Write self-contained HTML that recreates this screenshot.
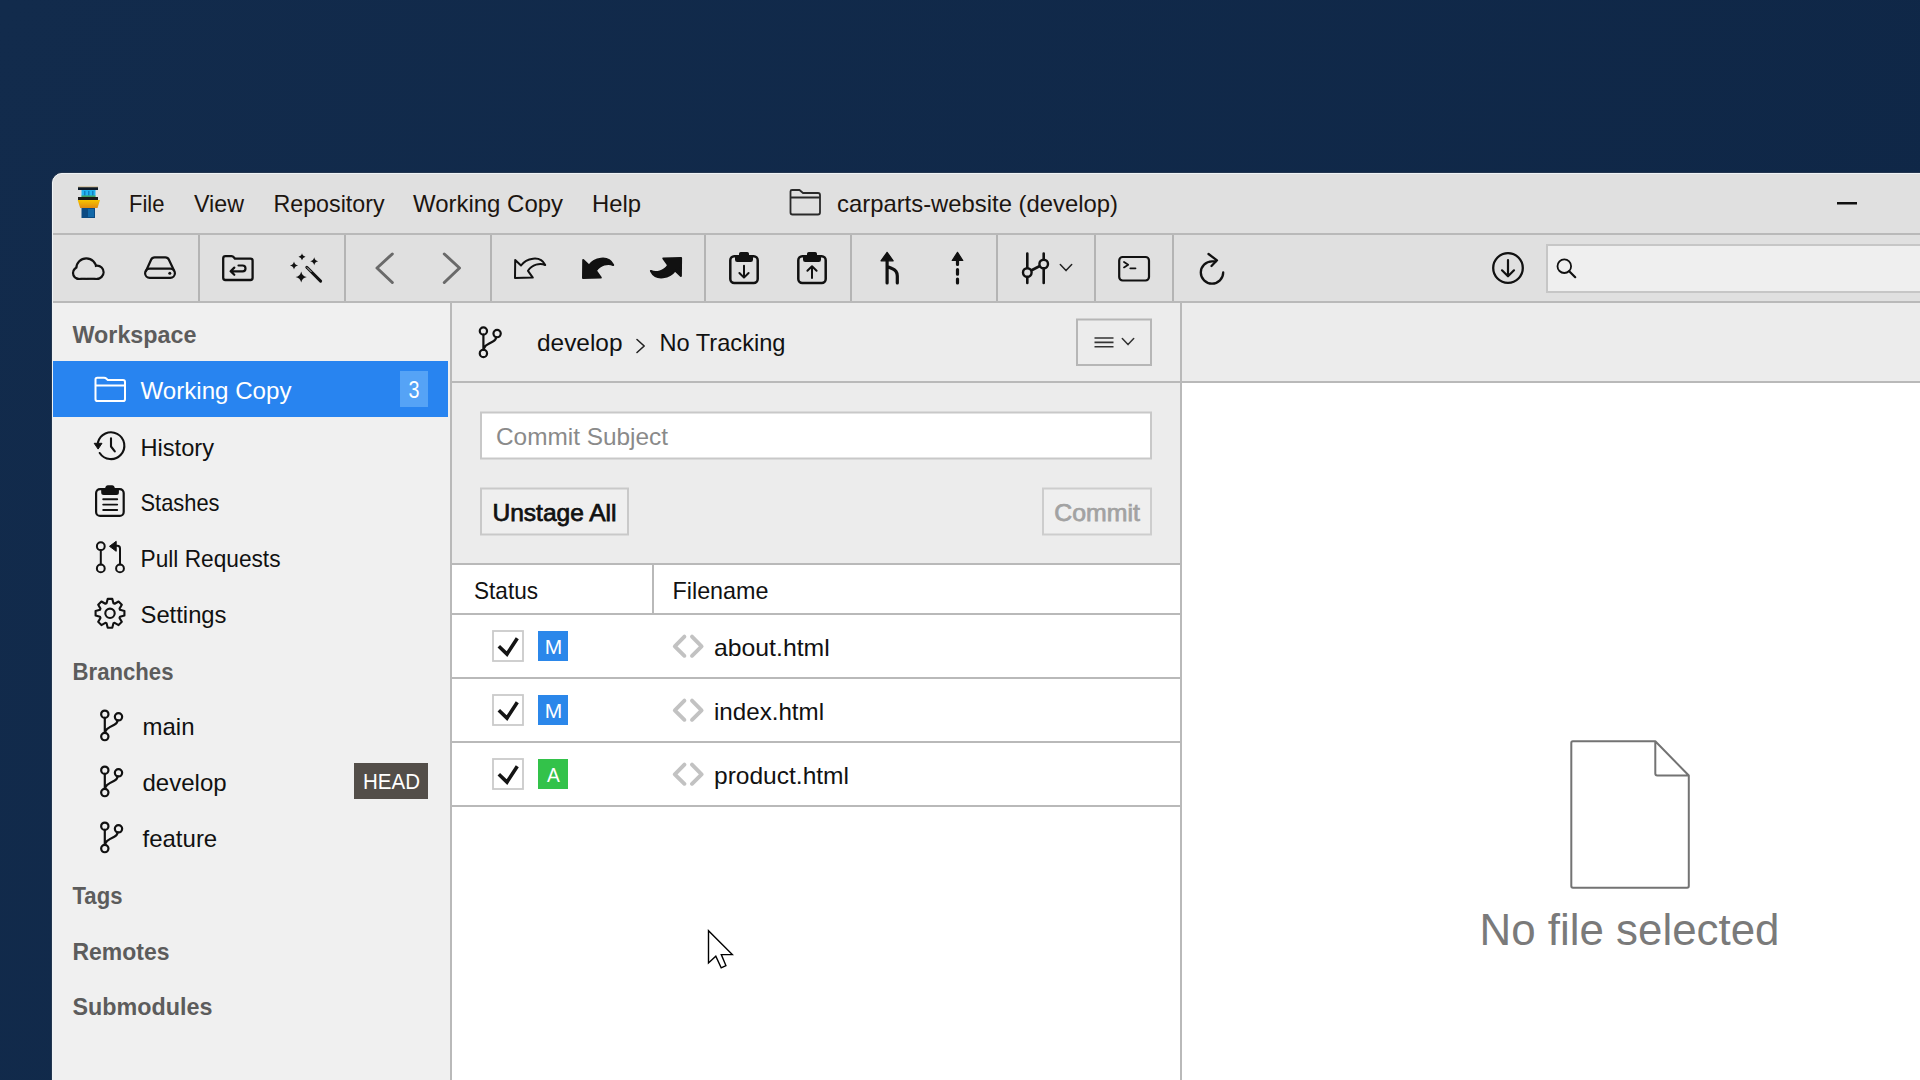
<!DOCTYPE html>
<html><head><meta charset="utf-8"><title>Working Copy</title>
<style>html,body{margin:0;padding:0;width:1920px;height:1080px;overflow:hidden;background:#10264a;font-family:"Liberation Sans", sans-serif;}svg{display:block}</style>
</head><body>
<svg width="1920" height="1080" viewBox="0 0 1920 1080" font-family='"Liberation Sans", sans-serif'><defs><linearGradient id="bg" x1="0" y1="0" x2="1" y2="0.3"><stop offset="0" stop-color="#122b4c"/><stop offset="1" stop-color="#0f2747"/></linearGradient><linearGradient id="sh" x1="0" y1="0" x2="0" y2="1"><stop offset="0" stop-color="#000" stop-opacity="0"/><stop offset="1" stop-color="#000" stop-opacity="0.22"/></linearGradient><linearGradient id="shl" x1="0" y1="0" x2="1" y2="0"><stop offset="0" stop-color="#000" stop-opacity="0"/><stop offset="1" stop-color="#000" stop-opacity="0.22"/></linearGradient><linearGradient id="yel" x1="0" y1="0" x2="0" y2="1"><stop offset="0" stop-color="#f7c600"/><stop offset="1" stop-color="#e08a10"/></linearGradient></defs>
<rect x="0" y="0" width="1920" height="1080" fill="url(#bg)"/>
<path d="M52 183 A10 10 0 0 1 62 173 H1920 V1080 H52 Z" fill="#e0e0e0"/>
<rect x="52" y="233" width="1868" height="2" fill="#b9b9b9"/>
<rect x="52" y="301" width="1868" height="2" fill="#b9b9b9"/>
<rect x="198" y="235" width="2" height="66" fill="#b4b4b4"/>
<rect x="344" y="235" width="2" height="66" fill="#b4b4b4"/>
<rect x="490" y="235" width="2" height="66" fill="#b4b4b4"/>
<rect x="704" y="235" width="2" height="66" fill="#b4b4b4"/>
<rect x="850" y="235" width="2" height="66" fill="#b4b4b4"/>
<rect x="996" y="235" width="2" height="66" fill="#b4b4b4"/>
<rect x="1094" y="235" width="2" height="66" fill="#b4b4b4"/>
<rect x="1172" y="235" width="2" height="66" fill="#b4b4b4"/>
<rect x="1547" y="245" width="380" height="47" fill="#efefef" stroke="#c6c6c6" stroke-width="2"/>
<rect x="52" y="303" width="398" height="777" fill="#f0f0f0"/>
<rect x="450" y="303" width="2" height="777" fill="#b9b9b9"/>
<rect x="452" y="303" width="728" height="78" fill="#ececec"/>
<rect x="452" y="381" width="728" height="2" fill="#b9b9b9"/>
<rect x="452" y="383" width="728" height="180" fill="#ececec"/>
<rect x="452" y="563" width="728" height="2" fill="#b9b9b9"/>
<rect x="452" y="565" width="728" height="515" fill="#ffffff"/>
<rect x="452" y="613" width="728" height="2" fill="#b9b9b9"/>
<rect x="452" y="677" width="728" height="2" fill="#b9b9b9"/>
<rect x="452" y="741" width="728" height="2" fill="#b9b9b9"/>
<rect x="452" y="805" width="728" height="2" fill="#b9b9b9"/>
<rect x="652" y="565" width="2" height="48" fill="#b9b9b9"/>
<rect x="1180" y="303" width="2" height="777" fill="#b9b9b9"/>
<rect x="1182" y="303" width="738" height="78" fill="#ececec"/>
<rect x="1182" y="381" width="738" height="2" fill="#b9b9b9"/>
<rect x="1182" y="383" width="738" height="697" fill="#ffffff"/>
<rect x="78" y="187" width="20" height="3" fill="#0d1b2a"/>
<rect x="78" y="186.5" width="20" height="0.8" fill="#c8b080"/>
<rect x="81.5" y="190" width="14" height="6.5" fill="#22b4f0"/>
<rect x="84" y="191" width="1.5" height="4.5" fill="#1280c0"/>
<rect x="88" y="191" width="1.5" height="4.5" fill="#1280c0"/>
<rect x="92" y="191" width="1.5" height="4.5" fill="#1280c0"/>
<rect x="81.5" y="195.5" width="14" height="1.5" fill="#40a060"/>
<rect x="78" y="197" width="20" height="3" fill="#1c1a18"/>
<path d="M77.7 200 H100 L97.5 208 H80.2 Z" fill="url(#yel)"/>
<rect x="81.5" y="208" width="13.5" height="10" fill="#0c4a82"/>
<rect x="88" y="209" width="6" height="8" fill="#1268a8"/>
<text x="129" y="211.5" font-size="24" font-weight="400" fill="#1c1510" text-anchor="start" textLength="35.5" lengthAdjust="spacingAndGlyphs">File</text>
<text x="194" y="211.5" font-size="24" font-weight="400" fill="#1c1510" text-anchor="start" textLength="50" lengthAdjust="spacingAndGlyphs">View</text>
<text x="273.5" y="211.5" font-size="24" font-weight="400" fill="#1c1510" text-anchor="start" textLength="111" lengthAdjust="spacingAndGlyphs">Repository</text>
<text x="413" y="211.5" font-size="24" font-weight="400" fill="#1c1510" text-anchor="start" textLength="150" lengthAdjust="spacingAndGlyphs">Working Copy</text>
<text x="592" y="211.5" font-size="24" font-weight="400" fill="#1c1510" text-anchor="start" textLength="49" lengthAdjust="spacingAndGlyphs">Help</text>
<path d="M790.5 212.5 V191.5 Q790.5 190 792 190 H799.5 L803 193 H818 Q820 193 820 195 V212.5 Q820 214.5 818 214.5 H792.5 Q790.5 214.5 790.5 212.5 Z M790.5 197.5 H820" fill="none" stroke="#2a2a2a" stroke-width="1.8" stroke-linejoin="round"/>
<text x="837" y="212" font-size="24" font-weight="400" fill="#1c1510" text-anchor="start" textLength="281" lengthAdjust="spacingAndGlyphs">carparts-website (develop)</text>
<rect x="1837" y="202" width="20" height="2.5" fill="#111"/>
<g fill="#111111" stroke="#111111" stroke-width="4.4"><circle cx="86.3" cy="268.3" r="8.9"/><circle cx="78.8" cy="273" r="4.7"/><circle cx="97" cy="272.2" r="5.5"/><rect x="78.8" y="268" width="18.2" height="9.7"/></g><g fill="#e0e0e0"><circle cx="86.3" cy="268.3" r="8.9"/><circle cx="78.8" cy="273" r="4.7"/><circle cx="97" cy="272.2" r="5.5"/><rect x="78.8" y="268" width="18.2" height="9.7"/></g>
<path d="M146 271 L151.2 259.5 Q152.2 257.3 154.6 257.3 H165.4 Q167.8 257.3 168.8 259.5 L174 270.5" fill="none" stroke="#111111" stroke-linecap="round" stroke-linejoin="round" stroke-width="2.2"/>
<rect x="145.1" y="268.6" width="29.8" height="9.2" rx="4.6" fill="none" stroke="#111111" stroke-linecap="round" stroke-linejoin="round" stroke-width="2.2"/>
<circle cx="169.8" cy="273.3" r="1.5" fill="#111111"/>
<path d="M223.2 258.5 Q223.2 256.2 225.5 256.2 H231.5 Q233 256.2 234 257.5 L235 258.7 H250.5 Q252.6 258.7 252.6 260.8 V277.8 Q252.6 280 250.5 280 H225.4 Q223.2 280 223.2 277.8 Z" fill="none" stroke="#111111" stroke-linecap="round" stroke-linejoin="round" stroke-width="2.3"/>
<path d="M238.5 265.5 H242.6 A2.9 2.9 0 0 1 242.6 271.3 H231 M234.3 267.6 L230.6 271.3 L234.3 274.8" fill="none" stroke="#111111" stroke-linecap="round" stroke-linejoin="round" stroke-width="2.2"/>
<path d="M302 253.2 Q302.595 256.10499999999996 305.5 256.7 Q302.595 257.295 302 260.2 Q301.405 257.295 298.5 256.7 Q301.405 256.10499999999996 302 253.2 Z M314.2 257.3 Q314.88 260.62 318.2 261.3 Q314.88 261.98 314.2 265.3 Q313.52 261.98 310.2 261.3 Q313.52 260.62 314.2 257.3 Z M294 261.4 Q294.697 264.803 298.1 265.5 Q294.697 266.197 294 269.6 Q293.303 266.197 289.9 265.5 Q293.303 264.803 294 261.4 Z M301.2 271.4 Q302.152 276.048 306.8 277 Q302.152 277.952 301.2 282.6 Q300.248 277.952 295.59999999999997 277 Q300.248 276.048 301.2 271.4 Z" fill="#111111"/>
<path d="M306.8 267.3 L320.6 281.1" stroke="#111111" stroke-width="3" stroke-linecap="round"/>
<path d="M307.2 267.7 L311.2 271.7" stroke="#e0e0e0" stroke-width="0.9" stroke-linecap="round"/>
<path d="M392.3 254 L377 268 L392.3 282.5 M444.3 254 L459.5 268 L444.3 282.5" fill="none" stroke="#6a6a6a" stroke-width="3" stroke-linecap="round" stroke-linejoin="round"/>
<path d="M515.2 260 L521 265.5 C526 258.5 540 254.5 545.2 265 C540 262.5 532 264.5 528 270.8 L532.8 277.6 L515 278 Z" fill="none" stroke="#111111" stroke-linecap="round" stroke-linejoin="round" stroke-width="2"/>
<g transform="translate(68 0)"><path d="M515.2 260 L521 265.5 C526 258.5 540 254.5 545.2 265 C540 262.5 532 264.5 528 270.8 L532.8 277.6 L515 278 Z" fill="#111111" stroke="#111111" stroke-width="2" stroke-linejoin="round"/></g>
<g transform="translate(666 268) rotate(180) translate(-530.1 -268)"><path d="M515.2 260 L521 265.5 C526 258.5 540 254.5 545.2 265 C540 262.5 532 264.5 528 270.8 L532.8 277.6 L515 278 Z" fill="#111111" stroke="#111111" stroke-width="2" stroke-linejoin="round"/></g>
<g transform="translate(0 0)"><rect x="730.3" y="256.2" width="27.4" height="26.8" rx="4" fill="none" stroke="#111111" stroke-linecap="round" stroke-linejoin="round" stroke-width="2.5"/><path d="M735 256 H739 V253.8 Q739 252 740.8 252 H747.2 Q749 252 749 253.8 V256 H753 V259.8 Q753 262 750.8 262 H737.2 Q735 262 735 259.8 Z" fill="#111111"/><path d="M744 265.8 V277.5 M739.4 273 L744 277.6 L748.6 273" fill="none" stroke="#111111" stroke-linecap="round" stroke-linejoin="round" stroke-width="2"/></g>
<g transform="translate(68 0)"><rect x="730.3" y="256.2" width="27.4" height="26.8" rx="4" fill="none" stroke="#111111" stroke-linecap="round" stroke-linejoin="round" stroke-width="2.5"/><path d="M735 256 H739 V253.8 Q739 252 740.8 252 H747.2 Q749 252 749 253.8 V256 H753 V259.8 Q753 262 750.8 262 H737.2 Q735 262 735 259.8 Z" fill="#111111"/><path d="M744 278 V266.5 M739.4 270.8 L744 266.2 L748.6 270.8" fill="none" stroke="#111111" stroke-linecap="round" stroke-linejoin="round" stroke-width="2"/></g>
<path d="M887.1 252.3 L881 260.8 H893.2 Z" fill="#111111" stroke="#111111" stroke-width="1.2" stroke-linejoin="round"/>
<path d="M887.1 260 V283 M887.1 266.5 L892 268.5 Q897.3 270.5 897.3 276 V283" fill="none" stroke="#111111" stroke-linecap="round" stroke-linejoin="round" stroke-width="3.2"/>
<path d="M957.5 252.3 L952.2 260.5 H962.8 Z" fill="#111111" stroke="#111111" stroke-width="1.2" stroke-linejoin="round"/>
<path d="M957.5 260 V264.5 M957.5 269.5 V274.2 M957.5 279 V283" fill="none" stroke="#111111" stroke-linecap="round" stroke-linejoin="round" stroke-width="3.2"/>
<path d="M1027.3 253.5 V283 M1043.7 253.5 V283 M1027.3 272.5 L1043.7 264" fill="none" stroke="#111111" stroke-linecap="round" stroke-linejoin="round" stroke-width="2.6"/>
<circle cx="1027.3" cy="272.5" r="4.3" fill="#e0e0e0" stroke="#111111" stroke-width="2.4"/>
<circle cx="1043.7" cy="264" r="4.3" fill="#e0e0e0" stroke="#111111" stroke-width="2.4"/>
<path d="M1060.3 264.6 L1066 270.6 L1071.7 264.6" fill="none" stroke="#222" stroke-width="1.5" stroke-linecap="round" stroke-linejoin="round"/>
<rect x="1119.2" y="257" width="29.8" height="23.5" rx="3.5" fill="none" stroke="#111111" stroke-linecap="round" stroke-linejoin="round" stroke-width="2.2"/>
<path d="M1124 262 L1128.2 264.7 L1124 267.4 M1130.3 268.3 H1135.5" fill="none" stroke="#111111" stroke-linecap="round" stroke-linejoin="round" stroke-width="1.8"/>
<path d="M1223.2 272.5 A11.2 11.2 0 1 1 1212 261.3 H1216" fill="none" stroke="#111111" stroke-linecap="round" stroke-linejoin="round" stroke-width="2.3"/>
<path d="M1208.5 254 L1217 260.3 L1211.5 266" fill="none" stroke="#111111" stroke-linecap="round" stroke-linejoin="round" stroke-width="2.3"/>
<circle cx="1508" cy="268" r="14.8" fill="none" stroke="#111111" stroke-linecap="round" stroke-linejoin="round" stroke-width="2.3"/>
<path d="M1508 260.2 V276 M1502 270.3 L1508 276.3 L1514 270.3" fill="none" stroke="#111111" stroke-linecap="round" stroke-linejoin="round" stroke-width="2.2"/>
<circle cx="1564.3" cy="266.2" r="6.8" fill="none" stroke="#111111" stroke-linecap="round" stroke-linejoin="round" stroke-width="1.8"/>
<path d="M1569.2 271.2 L1575.2 277.2" fill="none" stroke="#111111" stroke-linecap="round" stroke-linejoin="round" stroke-width="2.2"/>
<text x="72.5" y="343" font-size="24" font-weight="700" fill="#5c5c5c" text-anchor="start" textLength="124" lengthAdjust="spacingAndGlyphs">Workspace</text>
<rect x="52" y="361" width="396" height="56" fill="#2884f0"/>
<path d="M95.5 399.2 V379.5 Q95.5 377.8 97.2 377.8 H104 Q105.5 377.8 106.5 378.8 L107.8 380.1 H123 Q125 380.1 125 382.1 V399.2 Q125 401 123.2 401 H97.3 Q95.5 401 95.5 399.2 Z M95.5 385.5 H125" fill="none" stroke="#ffffff" stroke-width="2" stroke-linejoin="round"/>
<text x="140.5" y="399" font-size="24" font-weight="400" fill="#ffffff" text-anchor="start" textLength="151" lengthAdjust="spacingAndGlyphs">Working Copy</text>
<rect x="400" y="371" width="28" height="36" fill="#55a3f6"/>
<text x="408.6" y="398" font-size="24" font-weight="400" fill="#ffffff" text-anchor="start" textLength="11" lengthAdjust="spacingAndGlyphs">3</text>
<path d="M99.7 453 A13.4 13.4 0 1 0 97.9 442.6 M111 438.2 V446.5 L114.8 451.4" fill="none" stroke="#111111" stroke-linecap="round" stroke-linejoin="round" stroke-width="2.1"/>
<path d="M94.2 443.3 H102 L98.1 449.1 Z" fill="#111111" stroke="#111111" stroke-width="1" stroke-linejoin="round"/>
<text x="140.5" y="455.6" font-size="24" font-weight="400" fill="#111" text-anchor="start" textLength="73.5" lengthAdjust="spacingAndGlyphs">History</text>
<rect x="96.1" y="489.1" width="27.6" height="26.8" rx="4" fill="none" stroke="#111111" stroke-linecap="round" stroke-linejoin="round" stroke-width="2.2"/>
<path d="M101.2 489 H105 Q105.3 485.2 108 485.2 H112 Q114.7 485.2 115 489 H118.9 V492.5 Q118.9 495 116.4 495 H103.7 Q101.2 495 101.2 492.5 Z" fill="#111111"/>
<path d="M103.2 499.2 H117.2 M103.2 504.6 H117.2 M103.2 510 H117.2" fill="none" stroke="#111111" stroke-linecap="round" stroke-linejoin="round" stroke-width="1.9"/>
<text x="140.5" y="510.6" font-size="24" font-weight="400" fill="#111" text-anchor="start" textLength="79" lengthAdjust="spacingAndGlyphs">Stashes</text>
<circle cx="100.8" cy="546.2" r="3.9" fill="none" stroke="#111111" stroke-linecap="round" stroke-linejoin="round" stroke-width="2"/>
<circle cx="100.8" cy="568.4" r="3.9" fill="none" stroke="#111111" stroke-linecap="round" stroke-linejoin="round" stroke-width="2"/>
<circle cx="120" cy="568.4" r="3.9" fill="none" stroke="#111111" stroke-linecap="round" stroke-linejoin="round" stroke-width="2"/>
<path d="M100.8 550.1 V564.5 M120 564.5 V548.5 Q120 545.8 117.3 545.8 H114" fill="none" stroke="#111111" stroke-linecap="round" stroke-linejoin="round" stroke-width="2"/>
<path d="M109.5 546.3 L116.2 541.3 V551.3 Z" fill="#111111" stroke="#111111" stroke-width="1" stroke-linejoin="round"/>
<text x="140.5" y="566.7" font-size="24" font-weight="400" fill="#111" text-anchor="start" textLength="140" lengthAdjust="spacingAndGlyphs">Pull Requests</text>
<path d="M106.55 603.28 L107.72 598.88 L112.28 598.88 L113.45 603.28 L114.65 603.77 L118.58 601.49 L121.81 604.72 L119.53 608.65 L120.02 609.85 L124.42 611.02 L124.42 615.58 L120.02 616.75 L119.53 617.95 L121.81 621.88 L118.58 625.11 L114.65 622.83 L113.45 623.32 L112.28 627.72 L107.72 627.72 L106.55 623.32 L105.35 622.83 L101.42 625.11 L98.19 621.88 L100.47 617.95 L99.98 616.75 L95.58 615.58 L95.58 611.02 L99.98 609.85 L100.47 608.65 L98.19 604.72 L101.42 601.49 L105.35 603.77 Z" fill="none" stroke="#111111" stroke-linecap="round" stroke-linejoin="round" stroke-width="2.1"/>
<circle cx="110" cy="613.3" r="4.7" fill="none" stroke="#111111" stroke-linecap="round" stroke-linejoin="round" stroke-width="2.1"/>
<text x="140.5" y="622.7" font-size="24" font-weight="400" fill="#111" text-anchor="start" textLength="86" lengthAdjust="spacingAndGlyphs">Settings</text>
<text x="72.5" y="679.5" font-size="24" font-weight="700" fill="#5c5c5c" text-anchor="start" textLength="101" lengthAdjust="spacingAndGlyphs">Branches</text>
<circle cx="104.8" cy="714.2" r="3.65" fill="none" stroke="#111111" stroke-linecap="round" stroke-linejoin="round" stroke-width="2.2"/><circle cx="104.8" cy="736.6" r="3.65" fill="none" stroke="#111111" stroke-linecap="round" stroke-linejoin="round" stroke-width="2.2"/><circle cx="118.5" cy="716.8000000000001" r="3.65" fill="none" stroke="#111111" stroke-linecap="round" stroke-linejoin="round" stroke-width="2.2"/><path d="M104.8 717.8000000000001 V733.0 M105.6 731.2 Q106.6 728.5 109.3 727.4000000000001 L114.3 724.7 Q117.39999999999999 723.2 117.6 720.4000000000001" fill="none" stroke="#111111" stroke-linecap="round" stroke-linejoin="round" stroke-width="2.2"/>
<text x="142.5" y="735.1" font-size="24" font-weight="400" fill="#111" text-anchor="start">main</text>
<circle cx="104.8" cy="770.2" r="3.65" fill="none" stroke="#111111" stroke-linecap="round" stroke-linejoin="round" stroke-width="2.2"/><circle cx="104.8" cy="792.6" r="3.65" fill="none" stroke="#111111" stroke-linecap="round" stroke-linejoin="round" stroke-width="2.2"/><circle cx="118.5" cy="772.8000000000001" r="3.65" fill="none" stroke="#111111" stroke-linecap="round" stroke-linejoin="round" stroke-width="2.2"/><path d="M104.8 773.8000000000001 V789.0 M105.6 787.2 Q106.6 784.5 109.3 783.4000000000001 L114.3 780.7 Q117.39999999999999 779.2 117.6 776.4000000000001" fill="none" stroke="#111111" stroke-linecap="round" stroke-linejoin="round" stroke-width="2.2"/>
<text x="142.5" y="790.6" font-size="24" font-weight="400" fill="#111" text-anchor="start">develop</text>
<circle cx="104.8" cy="826.2" r="3.65" fill="none" stroke="#111111" stroke-linecap="round" stroke-linejoin="round" stroke-width="2.2"/><circle cx="104.8" cy="848.6" r="3.65" fill="none" stroke="#111111" stroke-linecap="round" stroke-linejoin="round" stroke-width="2.2"/><circle cx="118.5" cy="828.8000000000001" r="3.65" fill="none" stroke="#111111" stroke-linecap="round" stroke-linejoin="round" stroke-width="2.2"/><path d="M104.8 829.8000000000001 V845.0 M105.6 843.2 Q106.6 840.5 109.3 839.4000000000001 L114.3 836.7 Q117.39999999999999 835.2 117.6 832.4000000000001" fill="none" stroke="#111111" stroke-linecap="round" stroke-linejoin="round" stroke-width="2.2"/>
<text x="142.5" y="846.6" font-size="24" font-weight="400" fill="#111" text-anchor="start">feature</text>
<rect x="354" y="763" width="74" height="36" fill="#534e49"/>
<text x="363" y="789.4" font-size="22" font-weight="400" fill="#ffffff" text-anchor="start" textLength="57" lengthAdjust="spacingAndGlyphs">HEAD</text>
<text x="72.5" y="903.5" font-size="24" font-weight="700" fill="#5c5c5c" text-anchor="start" textLength="50" lengthAdjust="spacingAndGlyphs">Tags</text>
<text x="72.5" y="959.5" font-size="24" font-weight="700" fill="#5c5c5c" text-anchor="start" textLength="97" lengthAdjust="spacingAndGlyphs">Remotes</text>
<text x="72.5" y="1015" font-size="24" font-weight="700" fill="#5c5c5c" text-anchor="start" textLength="140" lengthAdjust="spacingAndGlyphs">Submodules</text>
<circle cx="483.4" cy="331" r="3.65" fill="none" stroke="#111111" stroke-linecap="round" stroke-linejoin="round" stroke-width="2.2"/><circle cx="483.4" cy="353.4" r="3.65" fill="none" stroke="#111111" stroke-linecap="round" stroke-linejoin="round" stroke-width="2.2"/><circle cx="497.09999999999997" cy="333.6" r="3.65" fill="none" stroke="#111111" stroke-linecap="round" stroke-linejoin="round" stroke-width="2.2"/><path d="M483.4 334.6 V349.8 M484.2 348 Q485.2 345.3 487.9 344.2 L492.9 341.5 Q496.0 340 496.2 337.2" fill="none" stroke="#111111" stroke-linecap="round" stroke-linejoin="round" stroke-width="2.2"/>
<text x="537" y="351" font-size="24" font-weight="400" fill="#111" text-anchor="start" textLength="85.5" lengthAdjust="spacingAndGlyphs">develop</text>
<path d="M637 339.5 L644.2 346 L637 352.5" fill="none" stroke="#222" stroke-width="1.6" stroke-linecap="round" stroke-linejoin="round"/>
<text x="659.5" y="351" font-size="24" font-weight="400" fill="#111" text-anchor="start" textLength="126" lengthAdjust="spacingAndGlyphs">No Tracking</text>
<rect x="1077" y="319.5" width="74" height="45.5" fill="none" stroke="#b6b6b6" stroke-width="2"/>
<path d="M1094.5 338 H1113.5 M1094.5 342.4 H1113.5 M1094.5 346.8 H1113.5" stroke="#333" stroke-width="1.6"/>
<path d="M1122.3 338.5 L1128 344.6 L1133.7 338.5" fill="none" stroke="#333" stroke-width="1.5" stroke-linecap="round" stroke-linejoin="round"/>
<rect x="481" y="412.5" width="670" height="46" fill="#ffffff" stroke="#c8c8c8" stroke-width="2"/>
<text x="496" y="445.3" font-size="24" font-weight="400" fill="#8a8a8a" text-anchor="start" textLength="172" lengthAdjust="spacingAndGlyphs">Commit Subject</text>
<rect x="481" y="488.5" width="147" height="46" fill="#efefef" stroke="#c9c9c9" stroke-width="2"/>
<text x="492.5" y="521" font-size="24" font-weight="400" fill="#111" text-anchor="start" textLength="124" lengthAdjust="spacingAndGlyphs" stroke="#111" stroke-width="0.75">Unstage All</text>
<rect x="1043" y="488.5" width="108" height="46" fill="#efefef" stroke="#cdcdcd" stroke-width="2"/>
<text x="1054.3" y="521" font-size="24" font-weight="400" fill="#a2a2a2" text-anchor="start" textLength="85.5" lengthAdjust="spacingAndGlyphs" stroke="#a2a2a2" stroke-width="0.75">Commit</text>
<text x="474" y="599.3" font-size="24" font-weight="400" fill="#111" text-anchor="start" textLength="64" lengthAdjust="spacingAndGlyphs">Status</text>
<text x="672.5" y="599.3" font-size="24" font-weight="400" fill="#111" text-anchor="start" textLength="96" lengthAdjust="spacingAndGlyphs">Filename</text>
<rect x="493" y="631" width="30" height="30" fill="#ffffff" stroke="#cacaca" stroke-width="1.8"/>
<path d="M498.8 646.3 L507 654.1 L517.3 638.3" fill="none" stroke="#141414" stroke-width="3.6" stroke-linejoin="miter"/>
<rect x="538" y="631" width="30" height="30" fill="#2b87ea"/>
<text x="553.5" y="654.2" font-size="20" font-weight="400" fill="#ffffff" text-anchor="middle" textLength="17.5" lengthAdjust="spacingAndGlyphs">M</text>
<path d="M684.4 636.6 L674.8 646.3 L684.4 655.8 M692 636.6 L701.6 646.3 L692 655.8" fill="none" stroke="#c2c2c2" stroke-width="3.9" stroke-linecap="round" stroke-linejoin="round"/>
<text x="714" y="656" font-size="24" font-weight="400" fill="#111" text-anchor="start" textLength="115.7" lengthAdjust="spacingAndGlyphs">about.html</text>
<rect x="493" y="695" width="30" height="30" fill="#ffffff" stroke="#cacaca" stroke-width="1.8"/>
<path d="M498.8 710.3 L507 718.1 L517.3 702.3" fill="none" stroke="#141414" stroke-width="3.6" stroke-linejoin="miter"/>
<rect x="538" y="695" width="30" height="30" fill="#2b87ea"/>
<text x="553.5" y="718.2" font-size="20" font-weight="400" fill="#ffffff" text-anchor="middle" textLength="17.5" lengthAdjust="spacingAndGlyphs">M</text>
<path d="M684.4 700.6 L674.8 710.3 L684.4 719.8 M692 700.6 L701.6 710.3 L692 719.8" fill="none" stroke="#c2c2c2" stroke-width="3.9" stroke-linecap="round" stroke-linejoin="round"/>
<text x="714" y="719.9" font-size="24" font-weight="400" fill="#111" text-anchor="start" textLength="110" lengthAdjust="spacingAndGlyphs">index.html</text>
<rect x="493" y="759" width="30" height="30" fill="#ffffff" stroke="#cacaca" stroke-width="1.8"/>
<path d="M498.8 774.3 L507 782.1 L517.3 766.3" fill="none" stroke="#141414" stroke-width="3.6" stroke-linejoin="miter"/>
<rect x="538" y="759" width="30" height="30" fill="#33c24a"/>
<text x="553.5" y="782.2" font-size="20" font-weight="400" fill="#ffffff" text-anchor="middle" textLength="12.8" lengthAdjust="spacingAndGlyphs">A</text>
<path d="M684.4 764.6 L674.8 774.3 L684.4 783.8 M692 764.6 L701.6 774.3 L692 783.8" fill="none" stroke="#c2c2c2" stroke-width="3.9" stroke-linecap="round" stroke-linejoin="round"/>
<text x="714" y="783.9" font-size="24" font-weight="400" fill="#111" text-anchor="start" textLength="135" lengthAdjust="spacingAndGlyphs">product.html</text>
<path d="M1571.3 742.8 Q1571.3 741.3 1572.8 741.3 H1655.3 L1688.8 775.5 V886 Q1688.8 887.7 1687.1 887.7 H1573 Q1571.3 887.7 1571.3 886 Z M1655.3 741.3 V773.5 Q1655.3 775.5 1657.3 775.5 H1688.8" fill="none" stroke="#737373" stroke-width="2" stroke-linejoin="round"/>
<text x="1479.5" y="945" font-size="44" font-weight="400" fill="#7a7a7a" text-anchor="start" textLength="300" lengthAdjust="spacingAndGlyphs">No file selected</text>
<path d="M51.5 1080 V183 A10.5 10.5 0 0 1 62 172.5 H1920" fill="none" stroke="#24364f" stroke-width="1"/>
<path d="M52.5 1080 V183 A9.5 9.5 0 0 1 62 173.5 H1920" fill="none" stroke="#eef3f6" stroke-width="1"/>
<path d="M708.5 930.8 V963 L715.8 956.2 L721.2 967.8 L725.9 965.6 L721.3 954.6 L732.3 954.6 Z" fill="#ffffff" stroke="#000" stroke-width="1.4" stroke-linejoin="miter"/></svg>
</body></html>
